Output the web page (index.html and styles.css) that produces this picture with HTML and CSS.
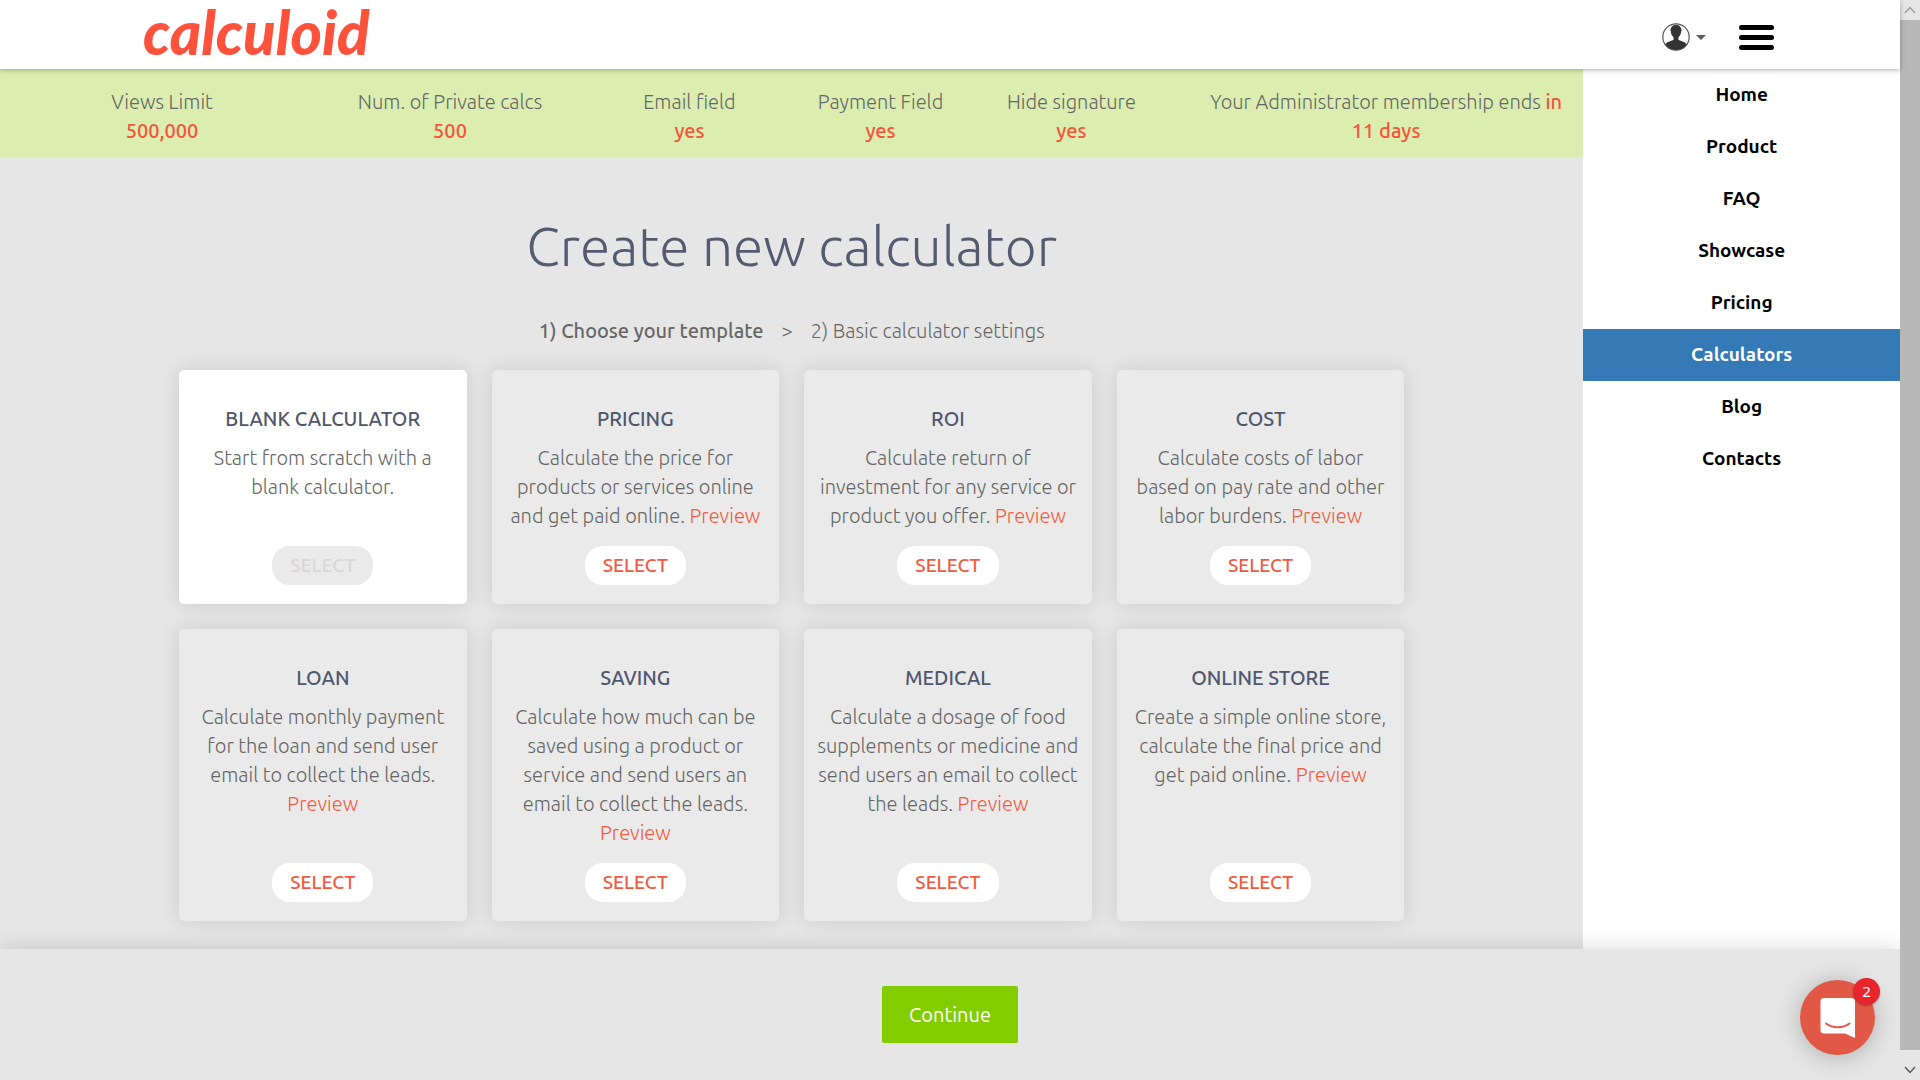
FILE: index.html
```html
<!DOCTYPE html>
<html lang="en">
<head>
<meta charset="utf-8">
<title>Create new calculator - Calculoid</title>
<link rel="stylesheet" href="styles.css">
</head>
<body>
<div class="page">
  <header class="header">
    <a class="logo" href="#">calculoid</a>
    <div class="header-tools">
      <button class="account" type="button" aria-label="Account">
        <svg width="28" height="28" viewBox="0 0 28 28" aria-hidden="true">
          <clipPath id="face"><circle cx="14" cy="14" r="13"/></clipPath>
          <circle cx="14" cy="14" r="13.2" fill="#fff" stroke="#555" stroke-width="1.2"/>
          <g fill="#333" clip-path="url(#face)">
            <path d="M14 2c-3.600 0-5.600 2.200-5.400 5.600.1 2.800 1.300 5.400 2.900 6.700v2.500c-1.200 1.300-7 1.700-8.500 5.200L5 28h18l2-6c-1.500-3.500-7.300-3.900-8.500-5.200v-2.500c1.600-1.300 2.800-3.900 2.900-6.700C19.600 4.200 17.600 2 14 2z"/>
          </g>
        </svg>
        <span class="caret"></span>
      </button>
      <button class="burger" type="button" aria-label="Menu"><span></span><span></span><span></span></button>
    </div>
  </header>

  <div class="body">
    <main class="main">
      <section class="limits">
        <div>Views Limit<br><strong>500,000</strong></div>
        <div>Num. of Private calcs<br><strong>500</strong></div>
        <div>Email field<br><strong>yes</strong></div>
        <div>Payment Field<br><strong>yes</strong></div>
        <div>Hide signature<br><strong>yes</strong></div>
        <div>Your Administrator membership ends <strong>in<br>11 days</strong></div>
      </section>
      <h1>Create new calculator</h1>
      <p class="steps"><strong>1) Choose your template</strong><span>&gt;</span><span>2) Basic calculator settings</span></p>
      <section class="cards">
        <article class="card selected"><h2>BLANK CALCULATOR</h2><p>Start from scratch with a blank calculator.</p><button type="button" disabled>SELECT</button></article>
        <article class="card"><h2>PRICING</h2><p>Calculate the price for products or services online and get paid online. <a href="#">Preview</a></p><button type="button">SELECT</button></article>
        <article class="card"><h2>ROI</h2><p>Calculate return of investment for any service or product you offer. <a href="#">Preview</a></p><button type="button">SELECT</button></article>
        <article class="card"><h2>COST</h2><p>Calculate costs of labor based&nbsp;on pay rate and other labor burdens. <a href="#">Preview</a></p><button type="button">SELECT</button></article>
        <article class="card"><h2>LOAN</h2><p>Calculate monthly payment for the loan and send user email to collect the leads. <a href="#">Preview</a></p><button type="button">SELECT</button></article>
        <article class="card"><h2>SAVING</h2><p>Calculate how much can be saved using a product or service and send users an email to collect the leads. <a href="#">Preview</a></p><button type="button">SELECT</button></article>
        <article class="card"><h2>MEDICAL</h2><p>Calculate a dosage of food supplements or medicine and send users an email to collect the leads. <a href="#">Preview</a></p><button type="button">SELECT</button></article>
        <article class="card"><h2>ONLINE STORE</h2><p>Create a simple online store, calculate the final price and get paid online. <a href="#">Preview</a></p><button type="button">SELECT</button></article>
      </section>
    </main>
    <nav class="menu">
      <a href="#">Home</a>
      <a href="#">Product</a>
      <a href="#">FAQ</a>
      <a href="#">Showcase</a>
      <a href="#">Pricing</a>
      <a class="active" href="#">Calculators</a>
      <a href="#">Blog</a>
      <a href="#">Contacts</a>
    </nav>
  </div>

  <footer class="footer">
    <button class="continue" type="button">Continue</button>
    <button class="chat" type="button" aria-label="Messages">
      <svg width="36" height="40" viewBox="0 0 36 40" aria-hidden="true">
        <path d="M4 0h27.500a3.500 3.500 0 0 1 3.500 3.500V40l-10-4.500H4A3.500 3.500 0 0 1 .5 32V3.500A3.500 3.500 0 0 1 4 0z" fill="#fff"/>
        <path d="M6 25.500c7 5 16.500 5 23.500 0" fill="none" stroke="#e15847" stroke-width="2" stroke-linecap="round"/>
      </svg>
      <span class="badge">2</span>
    </button>
  </footer>
</div>
<div class="scrollbar" aria-hidden="true">
  <svg width="20" height="20" viewBox="0 0 20 20"><path d="M5 13l5-5.500 5 5.500" fill="none" stroke="#999" stroke-width="1.300"/></svg>
  <div class="thumb"></div>
  <svg width="20" height="20" viewBox="0 0 20 20"><path d="M5 7l5 5.500 5-5.500" fill="none" stroke="#555" stroke-width="1.300"/></svg>
</div>
</body>
</html>
```
FILE: styles.css
```css
* { box-sizing: border-box; }
body {
  margin: 0;
  display: flex;
  min-height: 100vh;
  background: #e6e6e6;
  color: #666;
  font: 300 20px/29px Ubuntu, "Open Sans", sans-serif;
}
button { border: 0; font: inherit; cursor: pointer; }
a { color: #f05a41; text-decoration: none; }
strong { font-weight: 500; }
h1, h2, p { margin: 0; }

.page { flex: 1; min-width: 0; display: flex; flex-direction: column; }

.header {
  position: relative;
  z-index: 2;
  height: 69px;
  padding: 0 126px 0 143px;
  display: flex;
  justify-content: space-between;
  align-items: center;
  background: #fff;
  box-shadow: 0 1px 5px rgba(0, 0, 0, .3);
}
.logo { padding: 0 4px 6px 0; font: italic 900 60px/64px Lato, sans-serif; color: #ff523d; }
.header-tools { display: flex; align-items: center; gap: 33px; padding-top: 5px; }
.account { display: flex; align-items: center; gap: 6px; padding: 0; background: none; }
.caret { border: 5px solid transparent; border-top-color: #555b73; border-bottom: 0; }
.burger { width: 35px; padding: 0; display: grid; gap: 5px; background: none; }
.burger span { height: 5px; border-radius: 3px; background: #000; }

.body { flex: 1; display: grid; grid-template-columns: 5fr 1fr; }
.main { min-width: 0; text-align: center; padding-bottom: 27px; }
.limits {
  display: grid;
  grid-template-columns: 18.4% 18.4% 12.2% 12.2% 12.2% 1fr;
  padding: 18px 0 12px 18px;
  background: #dcedb0;
}
.limits div:last-child { padding-left: 22px; }
.limits strong { color: #f5533a; }
h1 { padding-top: 57px; font-size: 55px; line-height: 64px; font-weight: 300; color: #545b70; }
.steps { padding-top: 38px; display: flex; justify-content: center; gap: 18px; }

.cards {
  padding: 25px 179px 0;
  display: grid;
  grid-template-columns: repeat(4, 1fr);
  gap: 25px;
}
.card {
  padding: 34px 12px 19px;
  display: flex;
  flex-direction: column;
  align-items: center;
  border-radius: 5px;
  background: #eaeaea;
  box-shadow: 0 0 20px rgba(0, 0, 0, .12);
}
.card h2 { font-size: 20px; line-height: 29px; font-weight: 500; color: #50566e; }
.card p { padding: 10px 0 16px; flex: 1; }
.card button {
  height: 39px;
  padding: 0 18px;
  border-radius: 18px;
  background: #fff;
  color: #f05a41;
  font-weight: 500;
  font-size: 19px;
}
.card button:disabled { background: #eaeaea; color: #d8d8d8; }
.selected { background: #fff; }

.menu { display: flex; flex-direction: column; background: #fff; }
.menu a { padding: 10px 11px 12px; text-align: center; line-height: 30px; font-size: 19px; font-weight: 700; color: #000; }
.menu .active { background: #337ab7; color: #fff; }

.footer {
  position: sticky;
  bottom: 0;
  height: 131px;
  display: flex;
  justify-content: center;
  align-items: center;
  background: #e6e6e6;
  box-shadow: 0 0 20px rgba(0, 0, 0, .15);
}
.continue { padding: 14px 27px; border-radius: 2px; background: #82cc00; color: #fff; font-weight: 400; }
.chat {
  position: absolute;
  right: 25px;
  bottom: 25px;
  width: 75px;
  height: 75px;
  padding: 0;
  display: grid;
  place-items: center;
  border-radius: 50%;
  background: #e15847;
  box-shadow: 0 2px 24px rgba(0, 0, 0, .25);
}
.badge {
  position: absolute;
  top: -2px;
  right: -5px;
  width: 27px;
  height: 27px;
  border-radius: 50%;
  background: #e8252b;
  color: #fff;
  font: 400 15px/26px "Noto Sans", sans-serif;
  box-shadow: 0 1px 2px rgba(0, 0, 0, .3);
}

.scrollbar {
  position: sticky;
  top: 0;
  width: 20px;
  height: 100vh;
  display: flex;
  flex-direction: column;
  background: #e6e6e6;
}
.thumb { flex: 1; margin-bottom: 10px; background: #b8b8b8; }
```
